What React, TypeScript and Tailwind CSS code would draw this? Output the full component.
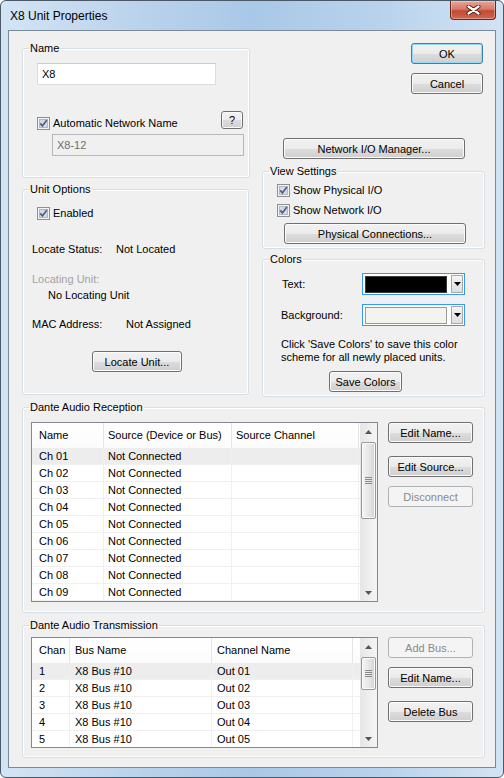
import React from "react";

type Variant = "normal" | "default" | "disabled";

const btnBase =
  "flex shrink-0 items-center justify-center rounded-[3px] border text-[11px] leading-none";
const btnVariants: Record<Variant, string> = {
  normal:
    "border-[#707070] bg-[linear-gradient(to_bottom,#f2f2f2_0%,#ebebeb_50%,#dddddd_51%,#cfcfcf_100%)] shadow-[inset_0_0_0_1px_#fbfbfb] text-black",
  default:
    "border-[#3c7fb1] bg-[linear-gradient(to_bottom,#f2f2f2_0%,#ebebeb_50%,#dddddd_51%,#cfcfcf_100%)] shadow-[inset_0_0_0_1px_#94d8f8] text-black",
  disabled: "border-[#adb2b5] bg-[#f4f4f4] text-[#8a8a8a]",
};

function Button({
  label,
  className = "",
  variant = "normal",
}: {
  label: string;
  className?: string;
  variant?: Variant;
}) {
  return (
    <div className={`${btnBase} ${btnVariants[variant]} ${className}`}>
      <span className="pt-[1px]">{label}</span>
    </div>
  );
}

function Check() {
  return (
    <svg width="13" height="13" viewBox="0 0 13 13" className="shrink-0">
      <rect x="0.5" y="0.5" width="12" height="12" fill="#f4f4f4" stroke="#8e8f8f" />
      <rect x="2.5" y="2.5" width="8" height="8" fill="#d5d9e0" stroke="#b4b9c1" />
      <path d="M3.3 6.4 L5.4 8.9 L9.9 3.1" fill="none" stroke="#4a5f8f" strokeWidth="1.7" />
    </svg>
  );
}

function CheckRow({ label, className = "" }: { label: string; className?: string }) {
  return (
    <div className={`flex h-[13px] items-center gap-[3px] ${className}`}>
      <Check />
      <span>{label}</span>
    </div>
  );
}

function Group({
  title,
  className = "",
  children,
}: {
  title: string;
  className?: string;
  children: React.ReactNode;
}) {
  return (
    <fieldset
      className={`rounded-[3px] border border-[#d5dfe5] shadow-[inset_0_0_0_1px_#ffffff] ${className}`}
    >
      <legend className="ml-[6px] px-[1px] leading-[13px]">{title}</legend>
      {children}
    </fieldset>
  );
}

function ColorCombo({ swatch }: { swatch: string }) {
  return (
    <div className="flex h-[22px] w-[103px] items-center border border-[#3399ff] bg-white pl-[2px] pr-[1px]">
      <div className={`h-[17px] w-[82px] border ${swatch}`} />
      <div className="ml-auto flex h-[18px] w-[12px] items-center justify-center border border-[#a8a8a8] bg-[linear-gradient(to_bottom,#f4f4f4,#dedede)]">
        <svg width="7" height="4" viewBox="0 0 7 4">
          <polygon points="0,0 7,0 3.5,4" fill="#000" />
        </svg>
      </div>
    </div>
  );
}

function Scrollbar({ thumb }: { thumb: string }) {
  return (
    <div className="flex w-[17px] shrink-0 flex-col bg-[linear-gradient(to_right,#e6e6e6,#f5f5f5)]">
      <div className="flex h-[17px] items-center justify-center">
        <svg width="7" height="4" viewBox="0 0 7 4">
          <polygon points="3.5,0 7,4 0,4" fill="#555" />
        </svg>
      </div>
      <div
        className={`mx-[1px] mt-[2px] flex flex-col items-center justify-center gap-[1px] rounded-[2px] border border-[#979797] bg-[linear-gradient(to_right,#f4f4f4,#e4e4e4_60%,#d2d2d2)] shadow-[inset_0_0_0_1px_#fbfbfb] ${thumb}`}
      >
        <div className="h-[1px] w-[7px] bg-[#8a8a8a]" />
        <div className="h-[1px] w-[7px] bg-[#8a8a8a]" />
        <div className="h-[1px] w-[7px] bg-[#8a8a8a]" />
        <div className="h-[1px] w-[7px] bg-[#8a8a8a]" />
      </div>
      <div className="flex-1" />
      <div className="flex h-[17px] items-center justify-center">
        <svg width="7" height="4" viewBox="0 0 7 4">
          <polygon points="0,0 7,0 3.5,4" fill="#555" />
        </svg>
      </div>
    </div>
  );
}

type Col = { label: string; w: string; pl: string };

function ListView({
  cols,
  rows,
  thumb,
  className = "",
}: {
  cols: Col[];
  rows: string[][];
  thumb: string;
  className?: string;
}) {
  return (
    <div className={`flex shrink-0 overflow-hidden border border-[#828790] bg-white ${className}`}>
      <div className="flex w-[328px] flex-col">
        <div className="flex h-[25px] shrink-0 bg-[linear-gradient(to_bottom,#ffffff,#fbfbfc)]">
          {cols.map((c) => (
            <div key={c.label} className={`flex items-center border-r border-[#e5e5e5] ${c.w} ${c.pl}`}>
              {c.label}
            </div>
          ))}
          <div className="flex-1" />
        </div>
        {rows.map((r, i) => (
          <div
            key={i}
            className={`flex h-[17px] shrink-0 border-b border-[#f0f0f0] ${i === 0 ? "bg-[#ededed]" : ""}`}
          >
            {cols.map((c, j) => (
              <div
                key={c.label}
                className={`flex items-center whitespace-nowrap border-r border-[#f0f0f0] ${c.w} ${c.pl}`}
              >
                {r[j]}
              </div>
            ))}
            <div className="flex-1" />
          </div>
        ))}
      </div>
      <Scrollbar thumb={thumb} />
    </div>
  );
}

const rxCols: Col[] = [
  { label: "Name", w: "w-[72px]", pl: "pl-[7px]" },
  { label: "Source (Device or Bus)", w: "w-[128px]", pl: "pl-[4px]" },
  { label: "Source Channel", w: "w-[127px]", pl: "pl-[4px]" },
];
const rxRows = Array.from({ length: 9 }, (_, i) => [`Ch 0${i + 1}`, "Not Connected", ""]);

const txCols: Col[] = [
  { label: "Chan", w: "w-[38px]", pl: "pl-[7px]" },
  { label: "Bus Name", w: "w-[142px]", pl: "pl-[5px]" },
  { label: "Channel Name", w: "w-[141px]", pl: "pl-[5px]" },
];
const txRows = Array.from({ length: 5 }, (_, i) => [`${i + 1}`, "X8 Bus #10", `Out 0${i + 1}`]);

export default function App() {
  return (
    <div className="flex h-[778px] w-[504px] flex-col overflow-hidden rounded-[6px] border border-[#4a5868] bg-[linear-gradient(90deg,#d3e4f5_0%,#bcd4ec_25%,#a9c8e7_50%,#b8d2ec_75%,#d2e3f4_100%)] font-['Liberation_Sans',Arial,sans-serif] text-[11px] leading-[13px] text-black">
      {/* title bar */}
      <div className="flex h-[29px] shrink-0 items-start justify-between">
        <div className="self-center pl-[9px] text-[12px] leading-[14px]">X8 Unit Properties</div>
        <div className="mr-[7px] flex h-[19px] w-[46px] items-center justify-center rounded-b-[4px] border border-t-0 border-[#6b2418] bg-[linear-gradient(to_bottom,#e8a596_0%,#d67a68_45%,#c24a33_55%,#d3664c_100%)] shadow-[inset_0_0_0_1px_rgba(255,255,255,0.35)]">
          <svg width="15" height="10" viewBox="0 0 15 10">
            <path d="M2.5 1.5 L12.5 8.5 M12.5 1.5 L2.5 8.5" stroke="#4a1c14" strokeWidth="4" strokeLinecap="round" />
            <path d="M2.5 1.5 L12.5 8.5 M12.5 1.5 L2.5 8.5" stroke="#ffffff" strokeWidth="2.2" strokeLinecap="round" />
          </svg>
        </div>
      </div>

      <div className="flex min-h-0 flex-1 px-[7px] pb-[9px]">
        <div className="flex flex-1 flex-col border border-[#7b8a9a] bg-[#f0f0f0]">
          {/* top section */}
          <div className="flex items-start pl-[13px] pt-[11px]">
            {/* left column */}
            <div className="flex w-[228px] flex-col">
              <Group title="Name" className="w-[228px]">
                <div className="flex h-[122px] flex-col">
                  <div className="ml-[14px] mt-[8px] flex h-[22px] w-[179px] items-center border border-[#dadde2] border-t-[#c9ccd2] bg-white pl-[4px]">
                    X8
                  </div>
                  <div className="ml-[14px] mt-[26px] flex h-[18px] w-[206px] items-start justify-between">
                    <CheckRow label="Automatic Network Name" className="mt-[6px]" />
                    <Button label="?" className="h-[18px] w-[22px]" />
                  </div>
                  <div className="ml-[29px] mt-[5px] flex h-[22px] w-[192px] items-center border border-[#b5b8bd] bg-[#f0f0f0] pl-[4px] text-[#6d6d6d]">
                    X8-12
                  </div>
                </div>
              </Group>

              <Group title="Unit Options" className="mt-[5px] w-[227px]">
                <div className="flex h-[198px] flex-col">
                  <CheckRow label="Enabled" className="ml-[14px] mt-[11px]" />
                  <div className="ml-[9px] mt-[23px] flex">
                    <span className="w-[84px]">Locate Status:</span>
                    <span>Not Located</span>
                  </div>
                  <div className="ml-[9px] mt-[17px] text-[#a3a3a3]">Locating Unit:</div>
                  <div className="ml-[25px] mt-[3px]">No Locating Unit</div>
                  <div className="ml-[9px] mt-[16px] flex">
                    <span className="w-[94px]">MAC Address:</span>
                    <span>Not Assigned</span>
                  </div>
                  <Button label="Locate Unit..." className="ml-[69px] mt-[20px] h-[21px] w-[90px]" />
                </div>
              </Group>
            </div>

            {/* right column */}
            <div className="ml-[12px] flex w-[223px] flex-col">
              <Button label="OK" variant="default" className="mr-[2px] mt-[1px] h-[21px] w-[72px] self-end" />
              <Button label="Cancel" className="mr-[2px] mt-[9px] h-[21px] w-[72px] self-end" />
              <Button label="Network I/O Manager..." className="ml-[21px] mt-[44px] h-[21px] w-[182px]" />

              <Group title="View Settings" className="mt-[6px] w-[223px]">
                <div className="flex h-[70px] flex-col">
                  <CheckRow label="Show Physical I/O" className="ml-[14px] mt-[6px]" />
                  <CheckRow label="Show Network I/O" className="ml-[14px] mt-[7px]" />
                  <Button label="Physical Connections..." className="ml-[21px] mt-[6px] h-[21px] w-[182px]" />
                </div>
              </Group>

              <Group title="Colors" className="mt-[4px] w-[223px]">
                <div className="flex h-[130px] flex-col">
                  <div className="ml-[19px] mt-[7px] flex h-[22px] items-center">
                    <span className="w-[80px]">Text:</span>
                    <ColorCombo swatch="border-[#3a3a3a] bg-black" />
                  </div>
                  <div className="ml-[18px] mt-[9px] flex h-[22px] items-center">
                    <span className="w-[81px]">Background:</span>
                    <ColorCombo swatch="border-[#9a9a9a] bg-[#f5f3ee]" />
                  </div>
                  <p className="ml-[18px] mt-[12px]">
                    Click 'Save Colors' to save this color
                    <br />
                    scheme for all newly placed units.
                  </p>
                  <Button label="Save Colors" className="ml-[66px] mt-[7px] h-[21px] w-[73px]" />
                </div>
              </Group>
            </div>
          </div>

          {/* Dante Audio Reception */}
          <div className="pl-[13px]">
            <Group title="Dante Audio Reception" className="mt-[4px] w-[463px]">
              <div className="flex h-[198px] items-start pl-[8px] pt-[8px]">
                <ListView cols={rxCols} rows={rxRows} thumb="h-[77px]" className="h-[180px] w-[347px]" />
                <div className="ml-[10px] flex flex-col">
                  <Button label="Edit Name..." className="h-[21px] w-[85px]" />
                  <Button label="Edit Source..." className="mt-[13px] h-[21px] w-[85px]" />
                  <Button label="Disconnect" variant="disabled" className="mt-[9px] h-[21px] w-[85px]" />
                </div>
              </div>
            </Group>

            {/* Dante Audio Transmission */}
            <Group title="Dante Audio Transmission" className="mt-[6px] w-[463px]">
              <div className="flex h-[125px] items-start pl-[8px] pt-[5px]">
                <ListView cols={txCols} rows={txRows} thumb="h-[33px]" className="h-[111px] w-[347px]" />
                <div className="ml-[10px] flex flex-col">
                  <Button label="Add Bus..." variant="disabled" className="h-[21px] w-[85px]" />
                  <Button label="Edit Name..." className="mt-[9px] h-[21px] w-[85px]" />
                  <Button label="Delete Bus" className="mt-[13px] h-[21px] w-[85px]" />
                </div>
              </div>
            </Group>
          </div>
        </div>
      </div>
    </div>
  );
}
